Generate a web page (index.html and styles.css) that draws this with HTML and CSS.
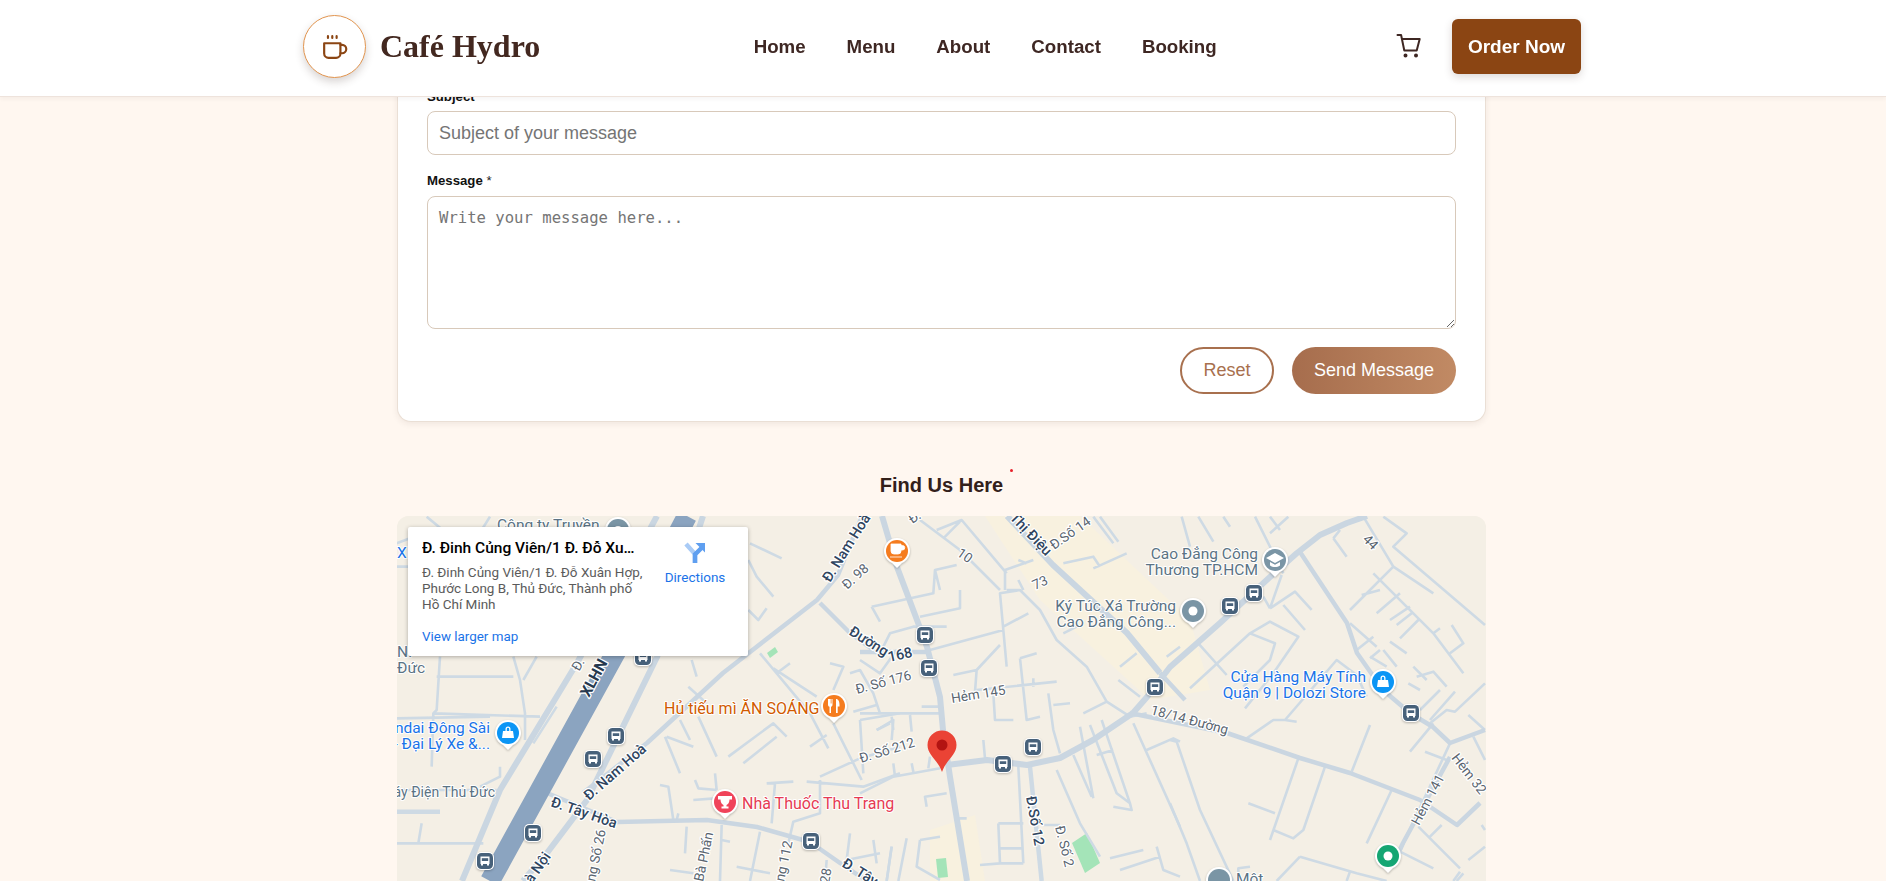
FILE: index.html

```html
<!DOCTYPE html>
<html lang="en">
<head>
  <meta charset="UTF-8">
  <title>Café Hydro - Contact</title>
  <link rel="stylesheet" href="styles.css">
</head>
<body>
  <header class="site-header">
    <div class="header-inner">
      <a class="brand" href="#">
        <span class="brand-logo">
          <svg width="26" height="26" viewBox="0 0 24 24" fill="none" stroke="#8b4513" stroke-width="2" stroke-linecap="round" stroke-linejoin="round">
            <path d="M2 8.500h15v9.500a4 4 0 0 1-4 4H6a4 4 0 0 1-4-4z"/>
            <path d="M17 10h1.500a3.700 3.700 0 0 1 0 7.800H17"/>
            <path d="M5.500 2v1.600M9.500 2v1.600M13.500 2v1.600"/>
          </svg>
        </span>
        <span class="brand-name">Café Hydro</span>
      </a>
      <nav class="main-nav">
        <a href="#">Home</a>
        <a href="#">Menu</a>
        <a href="#">About</a>
        <a href="#">Contact</a>
        <a href="#">Booking</a>
      </nav>
      <div class="header-actions">
        <svg class="cart" width="26" height="26" viewBox="0 0 26 26" fill="none" stroke="#3e2723" stroke-width="2" stroke-linecap="round" stroke-linejoin="round">
          <path d="M1.500 2h3.600l3.200 15.500h12.400l3-11.500H6"/>
          <circle cx="9.500" cy="22.500" r="1" fill="#3e2723"/>
          <circle cx="20" cy="22.500" r="1" fill="#3e2723"/>
        </svg>
        <a class="order-btn" href="#">Order Now</a>
      </div>
    </div>
  </header>

  <main class="page">
    <form class="contact-card">
      <label class="field-label" for="subject">Subject <span>*</span></label>
      <input class="field" type="text" id="subject" placeholder="Subject of your message">
      <label class="field-label second" for="message">Message <span>*</span></label>
      <textarea class="field area" id="message" placeholder="Write your message here..."></textarea>
      <div class="form-actions">
        <button class="btn-reset" type="reset">Reset</button>
        <button class="btn-send" type="button">Send Message</button>
      </div>
    </form>

    <h2 class="map-title"><span>Find Us Here<i class="title-dot"></i></span></h2>

    <div class="map">
      <svg class="map-canvas" width="1089" height="450" viewBox="397 516 1089 450">
        <defs>
          <g id="pin">
            <path d="M-5 12L0 17L5 12A13 13 0 1 0 -5 12Z" fill="#fff" class="pin-edge"/>
            <circle r="11"/>
          </g>
          <g id="bus">
            <rect x="-9" y="-9" width="18" height="18" rx="5" fill="#fff" class="pin-edge"/>
            <rect x="-8" y="-8" width="16" height="16" rx="4.500" fill="#47617a"/>
            <path d="M-4.500 -4.500h9v7.500h-9z" fill="#fff"/>
            <path d="M-3.200 -2.800h6.400v2.800h-6.400z" fill="#47617a"/>
            <path d="M-4 3h2v1.500h-2zM2 3h2v1.500h-2z" fill="#fff"/>
          </g>
        </defs>

        <rect x="397" y="516" width="1089" height="450" fill="#f4efe5"/>

        <!-- built-up patches -->
        <path d="M985 516L1080 516L1190 620L1210 690L1150 700L1040 600Z" fill="#f8f1df"/>
        <path d="M930 830L975 815L985 881L930 881Z" fill="#f8f1df"/>
        <path d="M1072 843L1087 833L1100 863L1085 873Z" fill="#a4e4b8"/>
        <path d="M936 859L946 858L948 877L938 878Z" fill="#a4e4b8"/>
        <path d="M767 653L775 647L778 652L770 658Z" fill="#a4e4b8"/>

        <!-- minor streets, traced per zone -->
        <g transform="translate(390 500) scale(.33333)" class="street">
          <path d="M20 200L60 200M150 470L140 630L130 640L450 650M140 530L370 530M370 470L390 540L405 640L405 720M130 640L125 800M20 655L300 650M20 870L320 870M20 1030L280 1030M95 970L85 1030M330 800L330 830L270 860M20 130L100 100M110 50L170 100M300 50L275 90M440 470L400 540M500 620L430 730M1080 130L1175 175M1075 180L1100 230L1150 290M1075 330L1105 360L1130 325"/>
          <path d="M20 935L150 935" class="street-wide"/>
        </g>
        <g transform="translate(660 640) scale(.33333)" class="street">
          <path d="M300 40L450 220L505 325M340 85L470 170M350 100L390 70M450 320L500 285M15 290L60 400M60 240L90 300M20 290L100 320M115 230L170 350M85 140L140 190M95 60L110 110M205 350L340 250L380 290M250 370L350 290M480 410L600 355L720 320M440 425L610 440L720 400M105 420L115 445L170 450M165 400L170 450M320 430L400 425M345 430L335 550M480 420L480 520L400 545L385 610M100 480L165 475M0 435L25 440L40 540M55 520L50 540M80 560L75 640M185 555L180 723M185 600L210 605M300 575L270 723M30 690L100 700M230 680L330 700M500 660L495 723M570 580L560 660L660 640M695 620L680 723M510 70L550 80L520 150M570 100L600 90L640 160L660 220M580 215L650 195M600 240L720 220M600 240L610 400M650 270L700 240L695 300M520 250L605 420"/>
        </g>
        <g transform="translate(860 510) scale(.33333)" class="street">
          <path d="M0 610L240 610M50 660L90 640M95 620L100 660M150 615L155 665M185 590L240 590M0 850L100 800L240 775M100 760L105 800M155 760L160 785M210 740L205 775M35 290L220 250L225 180L290 165M35 290L60 335M180 320L300 295L300 240M225 180L240 240M70 410L90 370L160 350L260 350M210 420L430 360L420 250L480 240M430 350L505 310M430 360L440 470M420 405L350 480L345 545M280 495L350 480M350 540L590 515M480 445L530 430M480 445L500 630L540 620M400 550L405 630L460 630M520 505L520 530M565 550L580 660L600 730M580 585L630 580M670 610L740 575M440 240L480 240L540 300L590 390L680 470L740 575L810 620L860 610M435 240L435 180L520 150M475 210L490 240M230 60L305 30L440 190M180 30L300 120L420 240M250 85L300 35M700 175L800 130M610 160L700 140L720 170M610 370L650 350M475 150L500 160M700 20L760 100M720 20L775 95M660 650L700 865M690 645L770 850L810 880L815 900L760 890M725 630L810 880M710 735L760 720M640 735L695 860M820 640L960 950M860 720L940 685L960 695M590 780L660 940L720 1040M200 890L195 860L260 850M415 940L420 1060L490 1060M415 940L490 940M420 1015L490 1015M475 770L490 1060M360 1065L420 1060M550 945L600 945M180 990L170 1070L240 1110M180 990L240 980M140 985L115 1113M95 1010L80 1113M40 990L50 1060M750 1045L850 1020M780 1080L900 1040M890 1010L910 1080L960 1100M295 925L320 925M370 690L375 745M780 470L830 430M775 510L840 560M920 440L960 410M0 450L60 490L110 420"/>
          <path d="M510 770L545 1113" class="street-wide"/>
        </g>
        <g transform="translate(1170 510) scale(.33333)" class="street">
          <path d="M60 535L240 370L300 335L385 380L310 490L225 595M85 400L170 495M240 370L315 400L300 450L220 530M340 285L405 360M300 295L375 245L425 300M335 195L300 295M280 260L300 295M85 20L130 95M35 20L60 110M160 20L180 50M255 20L340 190M300 20L330 60M355 20L300 70M490 85L530 140M490 85L510 60M640 20L710 70L670 110L945 345M580 20L670 170L790 250M670 170L540 300M610 190L790 370L880 490M575 255L630 240M620 310L690 250M540 340L620 410M560 420L610 380M660 330L720 290M680 345L725 310M690 385L745 330M660 395L710 430M845 345L880 400L840 430M790 370L810 355M630 420L600 445M600 440L650 470M640 420L680 470M730 470L770 510M715 520L750 540M740 500L790 485L830 530M750 600L810 540M780 630L855 545M780 640L830 600L855 605L945 520M895 615L945 660M600 645L545 785M345 630L380 635M345 630L500 450L560 495L590 560M230 685L310 630L345 630M385 745L300 990M465 770L400 960L370 985L310 960M235 880L315 910M665 840L590 1000M720 725L790 640M765 725L830 750M840 700L700 1000L690 1025M745 950L870 1075M690 1025L790 1075M780 980L815 945M860 945L930 880M895 1050L945 1010M935 945L945 960M0 690L20 695L90 900L190 1113M0 880L50 1000L90 1113M390 1040L560 1090L650 1113M390 1040L320 1113M240 1070L205 1075L205 1113M540 1085L530 1113M870 1085L850 1113M880 1090L860 1113M910 680L945 750"/>
        </g>

        <!-- main roads -->
        <path class="road" d="M882 516L897 567L917 620L927 647L940 697L943 730L950 777L967 881"/>
        <path class="road thin" d="M583 793L647 743L723 673L817 600L838 575L862 516"/>
        <path class="road thin" d="M820 603L850 633L883 657M860 652L927 652"/>
        <path class="road thin" d="M547 793L617 822L707 820L757 827L810 842L840 863L867 881"/>
        <path class="road" d="M947 765L987 760L1027 765L1060 758L1093 740L1133 713L1147 697L1170 667L1220 623L1270 577L1297 553L1320 535L1347 523L1367 516"/>
        <path class="road" d="M1007 516L1053 565L1127 633L1160 673"/>
        <path class="road thin" d="M1160 673L1185 700M1300 552L1347 623L1357 653L1383 690L1410 713L1433 727L1450 743L1485 730"/>
        <path class="road thin" d="M1130 713L1227 733L1300 758L1350 773L1420 800L1457 825L1480 803"/>
        <path class="road thin" d="M1450 757L1403 843L1395 860"/>

        <!-- expressway -->
        <path class="road" d="M657 516L617 590L577 663L500 790L462 881"/>
        <path class="road" d="M703 516L657 657L587 800L547 853L523 881"/>
        <path class="freeway" d="M687 516L617 650L490 881"/>

        <!-- road names -->
        <text class="rd navy bold" transform="translate(589 698) rotate(-62)">XLHN</text>
        <text class="rd navy" transform="translate(589 801) rotate(-41)">Đ. Nam Hoà</text>
        <text class="rd navy" transform="translate(550 806) rotate(19)">Đ. Tây Hòa</text>
        <text class="rd navy" transform="translate(830 583) rotate(-58)">Đ. Nam Hoà</text>
        <text class="rd" transform="translate(847 590) rotate(-42)">Đ. 98</text>
        <text class="rd navy" transform="translate(848 634) rotate(32)">Đường</text>
        <text class="rd navy" transform="translate(889 662) rotate(-12)">168</text>
        <text class="rd" transform="translate(857 694) rotate(-15)">Đ. Số 176</text>
        <text class="rd" transform="translate(952 703) rotate(-9)">Hẻm 145</text>
        <text class="rd" transform="translate(861 763) rotate(-17)">Đ. Số 212</text>
        <text class="rd" transform="translate(956 555) rotate(35)">10</text>
        <text class="rd" transform="translate(1035 590) rotate(-25)">73</text>
        <text class="rd" transform="translate(1054 550) rotate(-35)">Đ.Số 14</text>
        <text class="rd navy" transform="translate(1001 510) rotate(46)">n Thị Điệu</text>
        <text class="rd" transform="translate(1150 714) rotate(15)">18/14 Đường</text>
        <text class="rd" transform="translate(1362 540) rotate(45)">44</text>
        <text class="rd" transform="translate(1451 758) rotate(52)">Hẻm 32</text>
        <text class="rd" transform="translate(1419 826) rotate(-62)">Hẻm 141</text>
        <text class="rd navy" transform="translate(1026 797) rotate(80)">Đ.Số 12</text>
        <text class="rd" transform="translate(1055 827) rotate(76)">Đ. Số 2</text>
        <text class="rd" transform="translate(703 882) rotate(-78)">Bà Phấn</text>
        <text class="rd" transform="translate(595 882) rotate(-78)">ng Số 26</text>
        <text class="rd" transform="translate(784 882) rotate(-78)">ng 112</text>
        <text class="rd navy" transform="translate(532 884) rotate(-55)">à Nội</text>
        <text class="rd" transform="translate(829 884) rotate(-80)">28</text>
        <text class="rd navy" transform="translate(841 866) rotate(32)">Đ. Tây</text>
        <text class="rd" transform="translate(579 672) rotate(-60)">Đ.</text>
        <text class="rd" transform="translate(912 524) rotate(-32)">Đ.</text>

        <!-- place names -->
        <text class="poi grey" x="497" y="530">Công ty Truyền</text>
        <text class="poi blue" x="397" y="558">XI</text>
        <text class="poi grey" x="397" y="657">NI</text>
        <text class="poi grey" x="397" y="673">Đức</text>
        <text class="poi grey small" x="495" y="797" text-anchor="end">áy Điện Thủ Đức</text>
        <text class="poi blue" x="490" y="733" text-anchor="end">ndai Đông Sài</text>
        <text class="poi blue" x="490" y="749" text-anchor="end">- Đại Lý Xe &amp;...</text>
        <text class="poi orange" x="664" y="714">Hủ tiếu mì ĂN SOÁNG</text>
        <text class="poi rose" x="742" y="809">Nhà Thuốc Thu Trang</text>
        <text class="poi grey" x="1258" y="559" text-anchor="end">Cao Đẳng Công</text>
        <text class="poi grey" x="1258" y="575" text-anchor="end">Thương TP.HCM</text>
        <text class="poi grey" x="1176" y="611" text-anchor="end">Ký Túc Xá Trường</text>
        <text class="poi grey" x="1176" y="627" text-anchor="end">Cao Đẳng Công...</text>
        <text class="poi blue" x="1366" y="682" text-anchor="end">Cửa Hàng Máy Tính</text>
        <text class="poi blue" x="1366" y="698" text-anchor="end">Quận 9 | Dolozi Store</text>
        <text class="poi grey" x="1236" y="884">Một ...</text>

        <!-- bus stops -->
        <use href="#bus" x="616" y="736"/>
        <use href="#bus" x="593" y="759"/>
        <use href="#bus" x="533" y="833"/>
        <use href="#bus" x="485" y="861"/>
        <use href="#bus" x="811" y="841"/>
        <use href="#bus" x="643" y="657"/>
        <use href="#bus" x="925" y="635"/>
        <use href="#bus" x="929" y="668"/>
        <use href="#bus" x="1033" y="747"/>
        <use href="#bus" x="1003" y="764"/>
        <use href="#bus" x="1155" y="687"/>
        <use href="#bus" x="1254" y="593"/>
        <use href="#bus" x="1230" y="606"/>
        <use href="#bus" x="1411" y="713"/>

        <!-- pins -->
        <use href="#pin" x="618" y="530" fill="#7a95a5"/>
        <circle cx="618" cy="530" r="4" fill="#fff"/>

        <use href="#pin" x="897" y="551" fill="#f57c1f"/>
        <path d="M891 544h10v7a3 3 0 0 1-3 3h-4a3 3 0 0 1-3-3zM901 545.500h1.500a2 2 0 0 1 0 4.500H901M890 557h12" fill="#fff" stroke="#fff" stroke-width=".8"/>

        <use href="#pin" x="834" y="706" fill="#f57c1f"/>
        <path d="M828 699v6a2 2 0 0 0 1.500 1.800V713h1.500v-6.200a2 2 0 0 0 1.500-1.800v-6h-1v4.500h-.8V699h-.9v4.500H830V699zM836 699c2.500 0 3.500 2.500 3.500 5.500v2h-1.800V713H836z" fill="#fff"/>

        <use href="#pin" x="725" y="802" fill="#f0435a"/>
        <path d="M718 796h14v3.500h-2.500c0 3-1.500 5-3 5.500v1.500h2v2h-7v-2h2V805c-1.500-.5-3-2.500-3-5.500H718z" fill="#fff"/>

        <use href="#pin" x="508" y="733" fill="#0b95f5"/>
        <use href="#pin" x="1383" y="682" fill="#0b95f5"/>
        <path d="M503 731h10l1 7h-12zM505.500 731v-2a2.500 2.500 0 0 1 5 0v2h-1.300v-2a1.200 1.200 0 0 0-2.400 0v2z" fill="#fff"/>
        <path d="M1378 680h10l1 7h-12zM1380.500 680v-2a2.500 2.500 0 0 1 5 0v2h-1.300v-2a1.200 1.200 0 0 0-2.400 0v2z" fill="#fff"/>

        <use href="#pin" x="1193" y="611" fill="#7a95a5"/>
        <circle cx="1193" cy="611" r="4.500" fill="#fff"/>

        <use href="#pin" x="1275" y="560" fill="#7a95a5"/>
        <path d="M1275 553L1284 558L1275 563L1266 558ZM1270 562v3.500c3 2 7 2 10 0V562l-5 2.800z" fill="#fff"/>

        <use href="#pin" x="1388" y="856" fill="#15a673"/>
        <circle cx="1388" cy="856" r="4.500" fill="#fff"/>

        <use href="#pin" x="1219" y="880" fill="#7a95a5"/>

        <!-- selected place -->
        <path d="M942 772C938 760 927.500 755 927.500 745A14.500 14.500 0 0 1 956.500 745C956.500 755 946 760 942 772Z" fill="#ea4335"/>
        <circle cx="942" cy="745" r="5.500" fill="#b31412"/>
      </svg>

      <div class="place-card">
        <div class="place-info">
          <div class="place-name">Đ. Đinh Củng Viên/1 Đ. Đỗ Xuân Hợp</div>
          <div class="place-address">Đ. Đinh Củng Viên/1 Đ. Đỗ Xuân Hợp, Phước Long B, Thủ Đức, Thành phố Hồ Chí Minh</div>
          <a class="place-link" href="#">View larger map</a>
        </div>
        <a class="place-directions" href="#">
          <svg width="22" height="22" viewBox="0 0 22 22" fill="none">
            <path d="M2 2L11 12V21" stroke="#a9cbf6" stroke-width="4.500"/>
            <path d="M11 21V12.500L18 5.500" stroke="#5f9ff0" stroke-width="4.500"/>
            <path d="M11.500 1H21V10.500Z" fill="#5f9ff0"/>
          </svg>
          <span>Directions</span>
        </a>
      </div>
    </div>
  </main>
</body>
</html>
```

FILE: styles.css

```css
* { box-sizing: border-box; }
html, body { height: 100%; }
body { margin: 0; overflow: hidden; background: #fff7f0; color: #3e2723; font-family: "Liberation Sans", Arial, sans-serif; }
a { color: inherit; text-decoration: none; }

/* header */
.site-header { position: fixed; top: 0; left: 0; width: 100%; height: 97px; background: #fff; border-bottom: 1px solid #eee3dc; box-shadow: 0 2px 4px rgba(62, 39, 35, .05); z-index: 10; }
.header-inner { width: 1278px; height: 93px; margin-left: 303px; display: flex; align-items: center; justify-content: space-between; }
.brand { display: flex; align-items: center; gap: 14px; }
.brand-logo { width: 63px; height: 63px; border-radius: 50%; border: 1px solid #e2954f; background: #fff; display: flex; align-items: center; justify-content: center; box-shadow: 0 4px 8px rgba(62, 39, 35, .2); }
.brand-name { font-family: "Liberation Serif", "Times New Roman", serif; font-size: 32px; font-weight: bold; color: #432820; }
.main-nav { display: flex; gap: 41px; font-size: 18.7px; font-weight: bold; margin-left: 34px; }
.header-actions { display: flex; align-items: center; gap: 30px; }
.cart { display: block; margin-top: -2px; }
.order-btn { display: flex; align-items: center; justify-content: center; width: 129px; height: 55px; border-radius: 6px; background: #8b4513; color: #fff; font-size: 19px; font-weight: bold; box-shadow: 0 3px 8px rgba(62, 39, 35, .18); }

/* form */
.page { width: 1089px; margin-left: 397px; }
.contact-card { height: 422px; padding: 89px 29px 0; background: #fff; border: 1px solid #eadfd5; border-top: 0; border-radius: 0 0 14px 14px; box-shadow: 0 2px 6px rgba(62, 39, 35, .08); }
.field-label { display: block; height: 15px; line-height: 15px; font-size: 13.2px; font-weight: bold; color: #111; margin-bottom: 7px; }
.field-label span { font-weight: normal; color: #222; }
.field-label.second { margin-top: 18px; margin-bottom: 8px; }
.field { display: block; width: 100%; height: 44px; padding: 0 11px; border: 1px solid #d8c9ba; border-radius: 8px; background: #fff; font-family: "Liberation Sans", Arial, sans-serif; font-size: 18px; }
.field::placeholder { color: #757575; opacity: 1; }
.area { height: 133px; padding: 10px 11px; font-family: "DejaVu Sans Mono", monospace; font-size: 15.6px; line-height: 22px; }
.form-actions { display: flex; justify-content: flex-end; gap: 18px; margin-top: 18px; }
.form-actions button { height: 47px; border-radius: 24px; font-family: "Liberation Sans", Arial, sans-serif; font-size: 18px; }
.btn-reset { width: 94px; border: 2px solid #a8704e; background: #fff; color: #a8704e; }
.btn-send { width: 164px; border: 0; background: linear-gradient(90deg, #a66d4d, #c18a64); color: #fff; }

/* map */
.map-title { margin: 52px 0 19px; height: 23px; line-height: 23px; text-align: center; font-size: 20px; font-weight: bold; color: #33201a; }
.map-title span { position: relative; display: inline-block; }
.title-dot { position: absolute; top: -5px; right: -10px; width: 3px; height: 3px; border-radius: 50%; background: #e8202a; }
.map { position: relative; height: 450px; border-radius: 12px; overflow: hidden; background: #f4efe5; }
.map-canvas { display: block; }

.street path { fill: none; stroke: #cedae4; stroke-width: 2.600px; vector-effect: non-scaling-stroke; stroke-linejoin: round; }
.street path.street-wide { stroke-width: 4.500px; }
.road { fill: none; stroke: #cad6e1; stroke-width: 6px; stroke-linejoin: round; }
.road.thin { stroke-width: 4.500px; }
.freeway { fill: none; stroke: #8ba4c0; stroke-width: 20px; stroke-linejoin: round; }
.pin-edge { filter: drop-shadow(0 1px 1px rgba(0, 0, 0, .25)); }

.rd, .poi { font-family: Roboto, "Noto Sans", sans-serif; paint-order: stroke; stroke: #fff; stroke-linejoin: round; }
.rd { font-size: 13.500px; fill: #5a6570; stroke-width: 2.500px; }
.rd.navy { font-size: 14.500px; fill: #2f4560; font-weight: 500; }
.rd.bold { font-size: 15.500px; font-weight: 700; fill: #26394f; }
.poi { font-size: 15.500px; stroke-width: 2px; }
.poi.small { font-size: 14px; }
.poi.grey { fill: #5b7384; }
.poi.blue { fill: #1a73e8; }
.poi.orange { font-size: 16px; fill: #d15a00; }
.poi.rose { font-size: 16px; fill: #e63a53; }

.place-card { position: absolute; top: 11px; left: 11px; width: 340px; height: 129px; padding: 11px 14px; display: flex; background: #fff; box-shadow: 0 1px 4px rgba(0, 0, 0, .3); border-radius: 2px; font-family: Roboto, "Noto Sans", sans-serif; }
.place-info { width: 222px; flex: none; }
.place-name { font-size: 15.500px; font-weight: 500; line-height: 20px; color: #000; white-space: nowrap; overflow: hidden; text-overflow: ellipsis; width: 218px; }
.place-address { margin-top: 6px; font-size: 13.500px; line-height: 16px; color: #5b5b5b; width: 226px; }
.place-link { display: block; margin-top: 17px; font-size: 13.400px; line-height: 16px; color: #1a73e8; }
.place-directions { margin-left: 20px; margin-top: 4px; display: flex; flex-direction: column; align-items: center; gap: 5px; width: 62px; font-size: 13.500px; color: #1a73e8; }
```
